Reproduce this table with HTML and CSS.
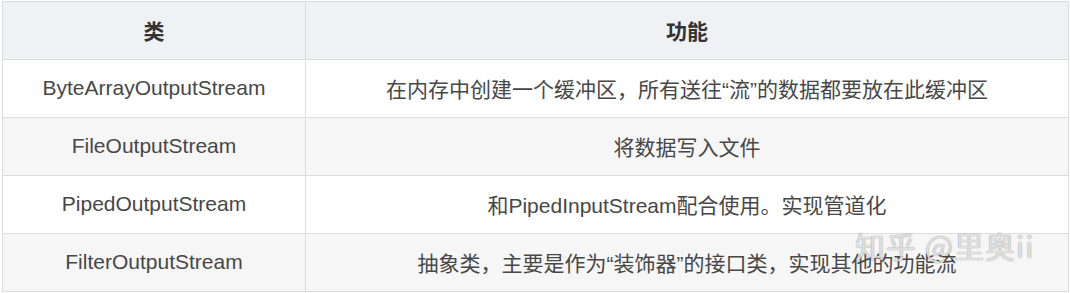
FILE: index.html
```html
<!DOCTYPE html>
<html lang="zh">
<head>
<meta charset="utf-8">
<link rel="stylesheet" href="styles.css">
</head>
<body>
<div class="wrap">
<table class="tbl">
  <thead>
    <tr><th class="c1">类</th><th class="c2">功能</th></tr>
  </thead>
  <tbody>
    <tr><td>ByteArrayOutputStream</td><td>在内存中创建一个缓冲区，所有送往“流”的数据都要放在此缓冲区</td></tr>
    <tr class="alt"><td>FileOutputStream</td><td>将数据写入文件</td></tr>
    <tr><td>PipedOutputStream</td><td>和PipedInputStream配合使用。实现管道化</td></tr>
    <tr class="alt"><td>FilterOutputStream</td><td>抽象类，主要是作为“装饰器”的接口类，实现其他的功能流</td></tr>
  </tbody>
</table>
<div class="mark">知乎 @里奥ii</div>
</div>
</body>
</html>
```
FILE: styles.css
```css
html, body {
  margin: 0;
  padding: 0;
  background: #ffffff;
}
.wrap {
  position: relative;
  padding: 1px 0 0 2px;
  width: 1067px;
}
.tbl {
  border-collapse: collapse;
  width: 1067px;
  font-family: "Liberation Sans", "Noto Sans CJK SC", Arial, sans-serif;
  font-size: 21px;
  color: #474747;
}
.tbl th, .tbl td {
  border: 1px solid #dcdcdc;
  height: 55px;
  padding: 0 0 2px 0;
  text-align: center;
  vertical-align: middle;
}
.tbl th {
  background: #eff2f5;
  font-weight: bold;
  color: #333;
}
.c1 { width: 302px; }
.alt td { background: #f6f6f6; }
.mark {
  position: absolute;
  left: 855px;
  top: 223px;
  font-family: "Noto Sans CJK SC", sans-serif;
  font-size: 30px;
  color: rgba(255,255,255,0.75);
  text-shadow: 0 0 1px rgba(0,0,0,0.35), 0 0 1px rgba(0,0,0,0.25);
  letter-spacing: 1px;
}
```
